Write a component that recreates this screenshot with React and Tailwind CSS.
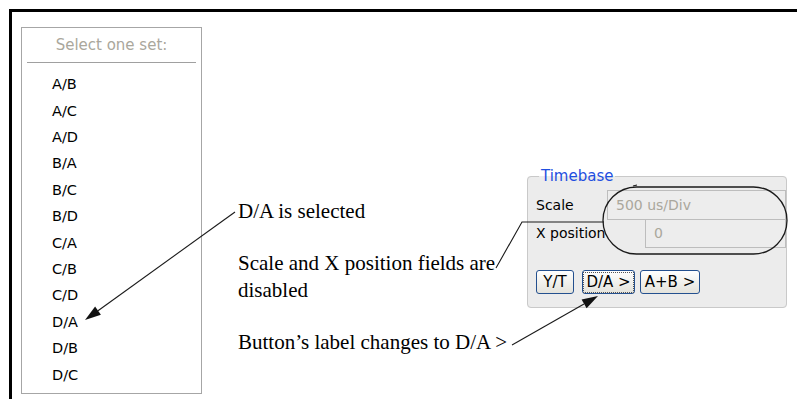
const sets = ["A/B", "A/C", "A/D", "B/A", "B/C", "B/D", "C/A", "C/B", "C/D", "D/A", "D/B", "D/C"];

const ui = { fontFamily: '"DejaVu Sans", Verdana, sans-serif' };
const serif = { fontFamily: '"Liberation Serif", "Times New Roman", serif' };

function SetList() {
  return (
    <div className="ml-[9px] mt-[15px] w-[181px] h-[367px] border border-[#a6a6a6] bg-white" style={ui}>
      <div className="h-[34px] flex items-center justify-center text-[15px] text-[#aaa79c]">Select one set:</div>
      <div className="mx-[5px] h-px bg-[#a0a0a0]" />
      <ul className="pt-[9px]">
        {sets.map((s) => (
          <li key={s} className="h-[26.4px] flex items-center pl-[30px] text-[14.5px] text-black">
            {s}
          </li>
        ))}
      </ul>
    </div>
  );
}

function Notes() {
  return (
    <div className="ml-[36px] mt-[186px] flex flex-col gap-[25px] text-[21px] leading-[27px] text-black" style={serif}>
      <p>D/A is selected</p>
      <p>
        Scale and X position fields are
        <br />
        disabled
      </p>
      <p>Button’s label changes to D/A &gt;</p>
    </div>
  );
}

function Btn({ children, focused, w }) {
  return (
    <button className={`${w} h-[24px] rounded-[3px] border border-[#24508f] bg-gradient-to-b from-white to-[#e4e3dc] text-[15px] leading-none text-black flex items-center justify-center`}>
      {focused ? (
        <span className="border border-dotted border-[#555] px-[2px] py-[2px] leading-none">{children}</span>
      ) : (
        <span>{children}</span>
      )}
    </button>
  );
}

function Timebase() {
  return (
    <fieldset className="ml-auto mr-[10px] mt-[156px] w-[260px] h-[140px] border border-[#c9c9c9] rounded-[4px] bg-[#ececec] pl-[8px] pt-[6px]" style={ui}>
      <legend className="ml-[3px] px-[2px] text-[15px] leading-[16px] text-[#1f4fe0]">Timebase</legend>
      <div className="flex items-center h-[30px]">
        <span className="w-[71px] text-[14px] text-black">Scale</span>
        <div className="flex-1 h-[30px] border border-[#bdbdbd] bg-[#ededed] flex items-center pl-[8px] text-[14px] text-[#aaa79c]">
          500 us/Div
        </div>
      </div>
      <div className="flex items-center h-[29px] -mt-px">
        <span className="w-[71px] overflow-hidden whitespace-nowrap text-[14px] text-black">X position</span>
        <div className="w-[38px] h-full" />
        <div className="flex-1 h-[29px] border border-[#bdbdbd] bg-[#ededed] flex items-center pl-[8px] text-[14px] text-[#aaa79c]">
          0
        </div>
      </div>
      <div className="flex mt-[22px]">
        <Btn w="w-[38px]">Y/T</Btn>
        <div className="w-[8px]" />
        <Btn focused w="w-[53px]">D/A &gt;</Btn>
        <div className="w-[5px]" />
        <Btn w="w-[60px]">A+B &gt;</Btn>
      </div>
    </fieldset>
  );
}

function Callouts() {
  return (
    <svg className="absolute inset-0 pointer-events-none" width="797" height="399" viewBox="0 0 797 399">
      <g stroke="#1a1a1a" strokeWidth="1.1" fill="none">
        <line x1="235" y1="212" x2="98" y2="310.7" />
        <polyline points="496,268 522,222 604,222" />
        <line x1="512" y1="345" x2="584" y2="304" />
        <rect x="603" y="187" width="184" height="67" rx="33.5" strokeWidth="1.3" />
        <path d="M633 186 l4 -1" />
      </g>
      <polygon points="85,320 100.9,314.8 95.1,306.6" fill="#111" />
      <polygon points="598,296 586.6,308.2 581.6,299.6" fill="#111" />
    </svg>
  );
}

export default function App() {
  return (
    <div className="relative w-[797px] h-[399px] bg-white overflow-hidden pt-[9px] pl-[9px] flex">
      <div className="flex-1 flex items-start border-t-[3px] border-l-[3px] border-black">
        <SetList />
        <Notes />
        <Timebase />
      </div>
      <Callouts />
    </div>
  );
}
